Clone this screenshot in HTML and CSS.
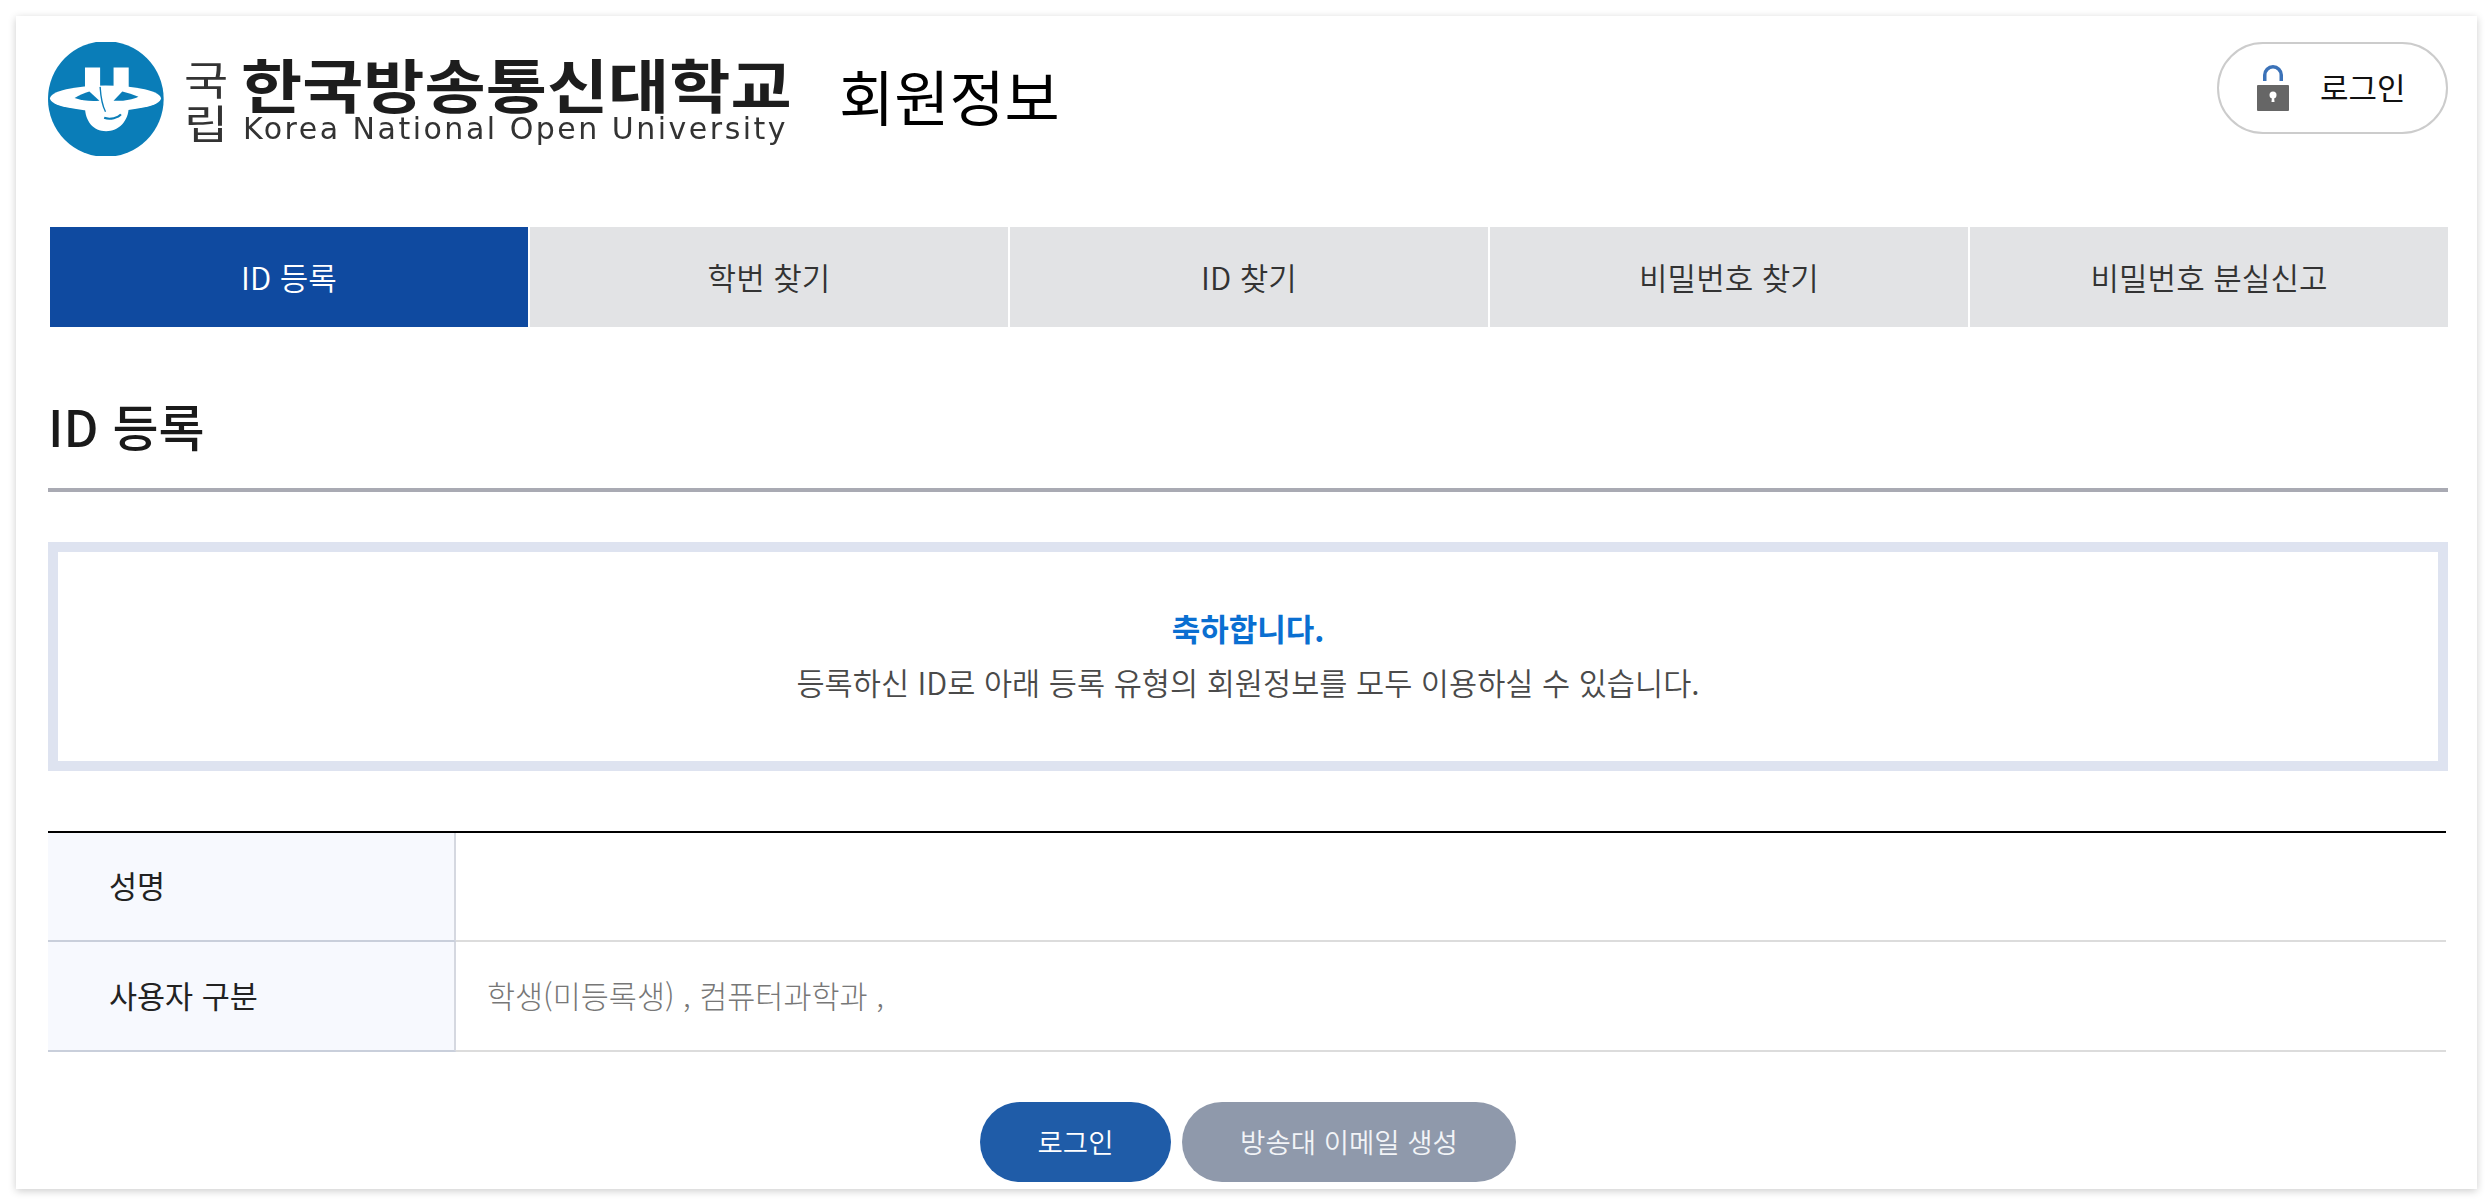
FILE: index.html
```html
<!DOCTYPE html>
<html lang="ko">
<head>
<meta charset="utf-8">
<title>회원정보</title>
<link rel="stylesheet" href="styles.css">
</head>
<body>
<div class="card">
  <header class="top">
    <div class="brand">
      <svg class="emblem" viewBox="55 37 345 338" aria-hidden="true">
        <circle cx="227" cy="206" r="172" fill="#0a7db8"/>
        <ellipse cx="226" cy="204" rx="165" ry="38" fill="#fff"/>
        <path d="M165 112H210V180H250V112H295V230C295 272 265 302 228 302C190 302 165 272 165 230Z" fill="#fff"/>
        <path d="M134 203C148 195 163 188 178 184L208 211C183 213 155 211 134 203Z" fill="#0a7db8"/>
        <path d="M324 199C308 193 292 188 276 184L250 211C275 213 305 208 324 199Z" fill="#0a7db8"/>
        <path d="M210 170C212 200 216 225 226 244" fill="none" stroke="#0a7db8" stroke-width="4"/>
        <path d="M222 262C240 268 264 262 272 252" fill="none" stroke="#0a7db8" stroke-width="6"/>
      </svg>
      <div class="kuk"><span>국</span><span>립</span></div>
      <div class="uni">
        <span class="uni-ko">한국방송통신대학교</span>
        <span class="uni-en">Korea National Open University</span>
      </div>
      <h1 class="site">회원정보</h1>
    </div>
    <a class="pill" href="#">
      <svg class="lock" viewBox="0 0 32 46" aria-hidden="true">
        <path d="M7.750 16V10A8.250 8.250 0 0 1 24.250 10V16" fill="none" stroke="#3b72b8" stroke-width="3.500"/>
        <rect x="0" y="20" width="32" height="26" rx="1" fill="#666"/>
        <circle cx="16" cy="30" r="3.500" fill="#fff"/>
        <path d="M15 31H17L17.500 37H14.500Z" fill="#fff"/>
      </svg>
      <span class="pill-label">로그인</span>
    </a>
  </header>

  <nav class="tabs">
    <a class="tab active" href="#">ID 등록</a>
    <a class="tab" href="#">학번 찾기</a>
    <a class="tab" href="#">ID 찾기</a>
    <a class="tab" href="#">비밀번호 찾기</a>
    <a class="tab" href="#">비밀번호 분실신고</a>
  </nav>

  <h2 class="heading">ID 등록</h2>

  <div class="notice">
    <p class="notice-title">축하합니다.</p>
    <p class="notice-text">등록하신 ID로 아래 등록 유형의 회원정보를 모두 이용하실 수 있습니다.</p>
  </div>

  <table class="info">
    <tr class="first"><th>성명</th><td></td></tr>
    <tr><th>사용자 구분</th><td>학생(미등록생) , 컴퓨터과학과 ,</td></tr>
  </table>

  <div class="actions">
    <a class="btn primary" href="#">로그인</a>
    <a class="btn muted" href="#">방송대 이메일 생성</a>
  </div>
</div>
</body>
</html>
```
FILE: styles.css
```css
* { box-sizing: border-box; }
html, body { margin: 0; padding: 0; background: #fff; }
body {
  padding: 16px 15px 15px 16px;
  font-family: "Noto Sans CJK KR", "Noto Sans", sans-serif;
  color: #222;
}
a { text-decoration: none; color: inherit; }
.card {
  height: 1173px;
  padding: 26px 29px 0 32px;
  background: #fff;
  box-shadow: 0 2px 8px rgba(0, 0, 0, .2);
  overflow: hidden;
}
.top { display: flex; justify-content: space-between; align-items: flex-start; height: 185px; }
.brand { display: flex; align-items: flex-start; }
.emblem { width: 116px; height: 114px; flex: none; filter: blur(.4px); }
.kuk {
  display: flex; flex-direction: column; margin: 14px 0 0 20px; width: 55px;
  font-size: 40px; line-height: 44px; color: #333; font-weight: 400;
  transform: scaleX(1.2); transform-origin: left center; filter: blur(.4px);
}
.uni { display: flex; flex-direction: column; margin: 11px 0 0 2px; width: 560px; filter: blur(.4px); }
.uni-ko {
  font-size: 66.500px; line-height: 66px; font-weight: 700; color: #1d1d1d; white-space: nowrap;
  transform: translateY(-4px) scaleY(.88); transform-origin: center;
}
.uni-en {
  font-size: 30px; line-height: 30px; margin-top: -5px; margin-left: 2px; color: #333;
  font-family: "DejaVu Sans", sans-serif; letter-spacing: 2.500px; white-space: nowrap;
}
.site { margin: 15px 0 0 38px; font-size: 60px; line-height: 76px; font-weight: 400; color: #000; white-space: nowrap; }
.pill {
  display: flex; align-items: center; width: 231px; height: 92px;
  border: 2px solid #ccc; border-radius: 46px; padding-left: 38px;
  font-size: 31px; color: #111;
}
.pill-label { padding-bottom: 3px; }
.lock { width: 32px; height: 46px; margin-right: 31px; flex: none; }
.tabs { display: flex; gap: 2px; margin-left: 2px; width: 2398px; }
.tab {
  flex: 1; height: 100px; padding-bottom: 2px; display: flex; align-items: center; justify-content: center;
  background: #e2e3e5; color: #333; font-size: 31px; font-weight: 350;
}
.tab.active { background: #0f4aa0; color: #fff; }
.heading {
  margin: 0; height: 165px; padding-top: 62px; font-size: 50px; line-height: 72px;
  font-weight: 500; color: #1a1a1a; border-bottom: 4px solid #a9aab3;
  width: 2400px;
}
.notice {
  width: 2400px; height: 229px; margin-top: 50px; padding-bottom: 3px; border: 10px solid #dee3f0;
  display: flex; flex-direction: column; justify-content: center; align-items: center;
}
.notice p { margin: 0; line-height: 54px; }
.notice-title { font-size: 31px; font-weight: 700; color: #0a6fd1; }
.notice-text { font-size: 30.600px; color: #4a4a4a; font-weight: 350; }
.info {
  width: 2398px; margin-top: 60px; border-collapse: separate; border-spacing: 0; table-layout: fixed;
  border-top: 2px solid #000;
}
.info th, .info td {
  height: 110px; padding: 0 0 3px; border-bottom: 2px solid #dcdcdc;
  font-size: 30.500px; vertical-align: middle;
}
.first th, .first td { height: 109px; }
.info th {
  width: 408px; padding-left: 61px; text-align: left; font-weight: 400; color: #222;
  background: #f7f9fe; border-right: 2px solid #d5d8e0; border-bottom-color: #c9cfdb;
}
.info td { padding-left: 31px; color: #777; font-weight: 300; }
.actions { display: flex; justify-content: center; gap: 11px; margin-top: 50px; }
.btn {
  height: 80px; padding-bottom: 3px; border-radius: 40px; display: flex; align-items: center; justify-content: center;
  color: #fff; font-size: 27.500px; font-weight: 350;
}
.primary { width: 191px; background: #1f5ca8; }
.muted { width: 334px; background: #8f99ab; color: #f2f4f7; }
```
